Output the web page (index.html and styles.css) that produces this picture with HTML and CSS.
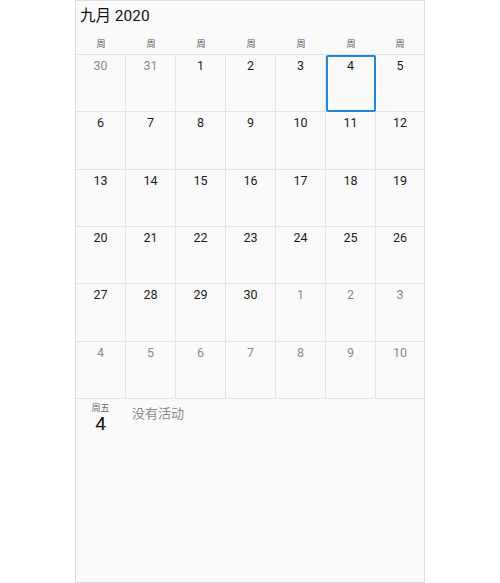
FILE: index.html
```html
<!DOCTYPE html>
<html lang="zh">
<head>
<meta charset="utf-8">
<title>九月 2020</title>
<link rel="stylesheet" href="styles.css">
</head>
<body>
<div class="panel">
  <div class="title">九月 2020</div>
  <div class="weekdays">
    <div>周</div><div>周</div><div>周</div><div>周</div><div>周</div><div>周</div><div>周</div>
  </div>
  <div class="grid">
    <div class="cell other">30</div><div class="cell other">31</div><div class="cell">1</div><div class="cell">2</div><div class="cell">3</div><div class="cell selected">4</div><div class="cell last">5</div>
    <div class="cell">6</div><div class="cell">7</div><div class="cell">8</div><div class="cell">9</div><div class="cell">10</div><div class="cell">11</div><div class="cell last">12</div>
    <div class="cell">13</div><div class="cell">14</div><div class="cell">15</div><div class="cell">16</div><div class="cell">17</div><div class="cell">18</div><div class="cell last">19</div>
    <div class="cell">20</div><div class="cell">21</div><div class="cell">22</div><div class="cell">23</div><div class="cell">24</div><div class="cell">25</div><div class="cell last">26</div>
    <div class="cell">27</div><div class="cell">28</div><div class="cell">29</div><div class="cell">30</div><div class="cell other">1</div><div class="cell other">2</div><div class="cell other last">3</div>
    <div class="cell other">4</div><div class="cell other">5</div><div class="cell other">6</div><div class="cell other">7</div><div class="cell other">8</div><div class="cell other">9</div><div class="cell other last">10</div>
  </div>
  <div class="agenda">
    <div class="agenda-date">
      <div class="agenda-dow">周五</div>
      <div class="agenda-day">4</div>
    </div>
    <div class="agenda-empty">没有活动</div>
  </div>
</div>
</body>
</html>
```
FILE: styles.css
```css
* { box-sizing: border-box; }
html, body { margin: 0; padding: 0; background: #fff; }
body {
  font-family: Roboto, "Noto Sans CJK SC", sans-serif;
  color: #222;
}
.panel {
  margin-left: 75px;
  width: 350px;
  height: 583px;
  border: 1px solid #dcdcdc;
  background: #fafafa;
  display: flex;
  flex-direction: column;
}
.title {
  height: 33px;
  line-height: 31px;
  padding-left: 4px;
  font-size: 15.5px;
  color: #111;
}
.weekdays {
  display: grid;
  grid-template-columns: repeat(6, 50px) 1fr;
  height: 21px;
  border-bottom: 1px solid #e2e2e2;
  font-size: 9px;
  color: #555;
  text-align: center;
  line-height: 20px;
}
.grid {
  display: grid;
  grid-template-columns: repeat(6, 50px) 1fr;
  grid-auto-rows: 57.33px;
}
.cell {
  border-right: 1px solid #e4e4e4;
  border-bottom: 1px solid #e4e4e4;
  text-align: center;
  font-size: 12.5px;
  line-height: 16px;
  padding-top: 3px;
  color: #1a1a1a;
}
.cell.last { border-right: none; }
.cell.other { color: #8a8a8a; }
.cell.selected {
  outline: 2px solid #1e88e5;
  outline-offset: -2px;
  border-radius: 2px;
}
.agenda {
  display: flex;
  align-items: flex-start;
  padding-top: 4px;
}
.agenda-date {
  width: 49px;
  text-align: center;
}
.agenda-dow {
  font-size: 9px;
  line-height: 11px;
  color: #666;
}
.agenda-day {
  font-size: 19px;
  line-height: 19px;
  color: #111;
}
.agenda-empty {
  margin-left: 7px;
  margin-top: 3px;
  font-size: 13px;
  line-height: 16px;
  color: #8a8a8a;
}
```
